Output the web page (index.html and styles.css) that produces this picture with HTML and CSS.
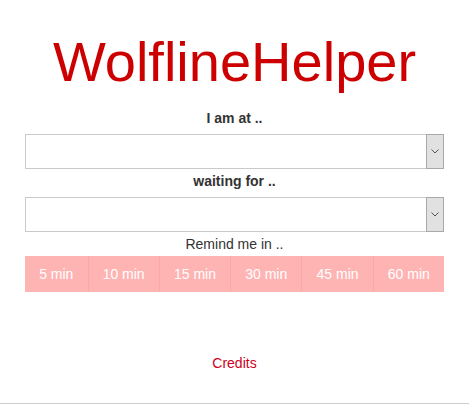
FILE: index.html
```html
<!DOCTYPE html>
<html lang="en">
<head>
<meta charset="utf-8">
<title>WolflineHelper</title>
<link rel="stylesheet" href="styles.css">
</head>
<body>
<div class="page">
  <h1 class="title">WolflineHelper</h1>
  <div class="label strong">I am at ..</div>
  <div class="select-box">
    <select class="select"></select>
    <span class="arrow"><svg width="8" height="5" viewBox="0 0 8 5"><path d="M0.5 0.5 L4 4 L7.5 0.5" fill="none" stroke="#555" stroke-width="1"/></svg></span>
  </div>
  <div class="label strong">waiting for ..</div>
  <div class="select-box">
    <select class="select"></select>
    <span class="arrow"><svg width="8" height="5" viewBox="0 0 8 5"><path d="M0.5 0.5 L4 4 L7.5 0.5" fill="none" stroke="#555" stroke-width="1"/></svg></span>
  </div>
  <div class="label remind">Remind me in ..</div>
  <div class="btn-row">
    <button class="btn">5 min</button>
    <button class="btn">10 min</button>
    <button class="btn">15 min</button>
    <button class="btn">30 min</button>
    <button class="btn">45 min</button>
    <button class="btn">60 min</button>
  </div>
  <div class="credits"><a class="credits-link" href="#">Credits</a></div>
</div>
</body>
</html>
```
FILE: styles.css
```css
html, body {
  margin: 0;
  padding: 0;
  background: #fff;
}
body {
  font-family: "Liberation Sans", Arial, sans-serif;
  font-size: 14px;
  color: #333;
}
.page {
  box-sizing: border-box;
  min-height: 404px;
  padding: 0 25px;
  border-bottom: 1px solid #cccccc;
  display: flex;
  flex-direction: column;
}
.title {
  margin: 30px 0 12px;
  font-size: 56px;
  line-height: 64px;
  font-weight: normal;
  color: #cc0000;
  text-align: center;
}
.label {
  text-align: center;
  line-height: 24px;
  margin-bottom: 4px;
}
.strong {
  font-weight: bold;
}
.remind {
  margin-bottom: 0;
  padding-top: 1px;
  line-height: 23px;
}
.select-box {
  display: flex;
  height: 35px;
}
.select {
  flex: 1;
  -webkit-appearance: none;
  appearance: none;
  margin: 0;
  height: 35px;
  box-sizing: border-box;
  border: 1px solid #cacaca;
  border-right: none;
  background: #fff;
  border-radius: 0;
  outline: none;
}
.arrow {
  width: 18px;
  height: 35px;
  box-sizing: border-box;
  border: 1px solid #a9a9a9;
  background: #e1e1e1;
  display: flex;
  align-items: center;
  justify-content: center;
}
.btn-row {
  display: flex;
  height: 36px;
}
.btn {
  flex: 1 1 auto;
  margin: 0;
  padding: 0;
  border: none;
  border-left: 1px solid #ffa6a6;
  background: #ffb4b4;
  color: #fff;
  font-family: "Liberation Sans", Arial, sans-serif;
  font-size: 14px;
  height: 36px;
}
.btn:first-child {
  border-left: none;
}
.credits {
  margin-top: 63px;
  text-align: center;
  line-height: 16px;
}
.credits-link {
  color: #cc0022;
  text-decoration: none;
}
```
